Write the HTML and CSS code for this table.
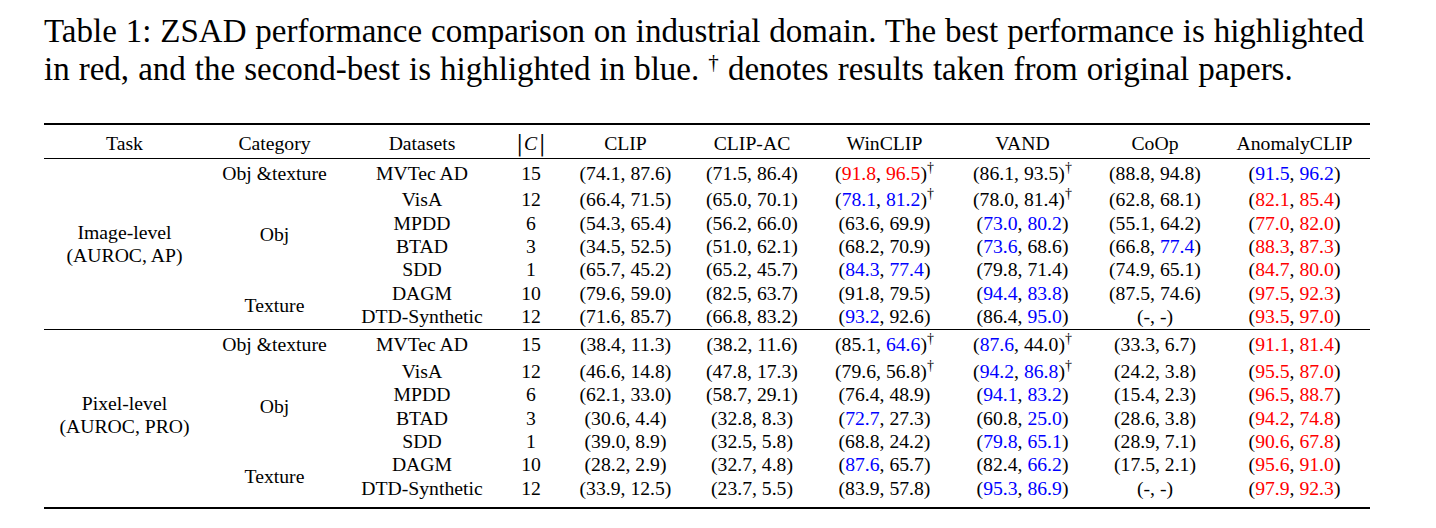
FILE: index.html
```html
<!DOCTYPE html>
<html lang="en">
<head>
<meta charset="utf-8">
<title>Table 1</title>
<link rel="stylesheet" href="styles.css">
</head>
<body>
<div class="page">
  <p class="caption">Table 1: ZSAD performance comparison on industrial domain. The best performance is highlighted <span class="tail">in red, and the second-best is highlighted in blue. <sup class="cdag">†</sup> denotes results taken from original papers.</span></p>
  <table class="results">
    <colgroup>
      <col class="w-task"><col class="w-cat"><col class="w-ds"><col class="w-n">
      <col class="w-clip"><col class="w-ac"><col class="w-win"><col class="w-vand"><col class="w-coop"><col class="w-anom">
    </colgroup>
    <thead>
      <tr>
        <th>Task</th><th>Category</th><th>Datasets</th>
        <th><span class="bar">|</span><span class="calc">C</span><span class="bar">|</span></th>
        <th>CLIP</th><th>CLIP-AC</th><th>WinCLIP</th><th>VAND</th><th>CoOp</th><th>AnomalyCLIP</th>
      </tr>
    </thead>
    <tbody class="img">
      <tr class="d1">
        <td class="span two" rowspan="7">Image-level<br>(AUROC, AP)</td>
        <td class="c">Obj &amp;texture</td>
        <td class="c">MVTec AD</td><td class="c">15</td>
        <td class="c">(74.1, 87.6)</td><td class="c">(71.5, 86.4)</td>
        <td class="c">(<span class="r">91.8</span>, <span class="r">96.5</span>)<sup class="dag">†</sup></td>
        <td class="c">(86.1, 93.5)<sup class="dag">†</sup></td>
        <td class="c">(88.8, 94.8)</td>
        <td class="c">(<span class="b">91.5</span>, <span class="b">96.2</span>)</td>
      </tr>
      <tr class="d2">
        <td class="span obj" rowspan="4">Obj</td>
        <td class="c">VisA</td><td class="c">12</td>
        <td class="c">(66.4, 71.5)</td><td class="c">(65.0, 70.1)</td>
        <td class="c">(<span class="b">78.1</span>, <span class="b">81.2</span>)<sup class="dag">†</sup></td>
        <td class="c">(78.0, 81.4)<sup class="dag">†</sup></td>
        <td class="c">(62.8, 68.1)</td>
        <td class="c">(<span class="r">82.1</span>, <span class="r">85.4</span>)</td>
      </tr>
      <tr>
        <td class="c">MPDD</td><td class="c">6</td>
        <td class="c">(54.3, 65.4)</td><td class="c">(56.2, 66.0)</td>
        <td class="c">(63.6, 69.9)</td>
        <td class="c">(<span class="b">73.0</span>, <span class="b">80.2</span>)</td>
        <td class="c">(55.1, 64.2)</td>
        <td class="c">(<span class="r">77.0</span>, <span class="r">82.0</span>)</td>
      </tr>
      <tr>
        <td class="c">BTAD</td><td class="c">3</td>
        <td class="c">(34.5, 52.5)</td><td class="c">(51.0, 62.1)</td>
        <td class="c">(68.2, 70.9)</td>
        <td class="c">(<span class="b">73.6</span>, 68.6)</td>
        <td class="c">(66.8, <span class="b">77.4</span>)</td>
        <td class="c">(<span class="r">88.3</span>, <span class="r">87.3</span>)</td>
      </tr>
      <tr>
        <td class="c">SDD</td><td class="c">1</td>
        <td class="c">(65.7, 45.2)</td><td class="c">(65.2, 45.7)</td>
        <td class="c">(<span class="b">84.3</span>, <span class="b">77.4</span>)</td>
        <td class="c">(79.8, 71.4)</td>
        <td class="c">(74.9, 65.1)</td>
        <td class="c">(<span class="r">84.7</span>, <span class="r">80.0</span>)</td>
      </tr>
      <tr>
        <td class="span" rowspan="2">Texture</td>
        <td class="c">DAGM</td><td class="c">10</td>
        <td class="c">(79.6, 59.0)</td><td class="c">(82.5, 63.7)</td>
        <td class="c">(91.8, 79.5)</td>
        <td class="c">(<span class="b">94.4</span>, <span class="b">83.8</span>)</td>
        <td class="c">(87.5, 74.6)</td>
        <td class="c">(<span class="r">97.5</span>, <span class="r">92.3</span>)</td>
      </tr>
      <tr class="last">
        <td class="c">DTD-Synthetic</td><td class="c">12</td>
        <td class="c">(71.6, 85.7)</td><td class="c">(66.8, 83.2)</td>
        <td class="c">(<span class="b">93.2</span>, 92.6)</td>
        <td class="c">(86.4, <span class="b">95.0</span>)</td>
        <td class="c">(-, -)</td>
        <td class="c">(<span class="r">93.5</span>, <span class="r">97.0</span>)</td>
      </tr>
    </tbody>
    <tbody class="px">
      <tr class="d1">
        <td class="span two bb" rowspan="7">Pixel-level<br>(AUROC, PRO)</td>
        <td class="c">Obj &amp;texture</td>
        <td class="c">MVTec AD</td><td class="c">15</td>
        <td class="c">(38.4, 11.3)</td><td class="c">(38.2, 11.6)</td>
        <td class="c">(85.1, <span class="b">64.6</span>)<sup class="dag">†</sup></td>
        <td class="c">(<span class="b">87.6</span>, 44.0)<sup class="dag">†</sup></td>
        <td class="c">(33.3, 6.7)</td>
        <td class="c">(<span class="r">91.1</span>, <span class="r">81.4</span>)</td>
      </tr>
      <tr class="d2">
        <td class="span obj" rowspan="4">Obj</td>
        <td class="c">VisA</td><td class="c">12</td>
        <td class="c">(46.6, 14.8)</td><td class="c">(47.8, 17.3)</td>
        <td class="c">(79.6, 56.8)<sup class="dag">†</sup></td>
        <td class="c">(<span class="b">94.2</span>, <span class="b">86.8</span>)<sup class="dag">†</sup></td>
        <td class="c">(24.2, 3.8)</td>
        <td class="c">(<span class="r">95.5</span>, <span class="r">87.0</span>)</td>
      </tr>
      <tr>
        <td class="c">MPDD</td><td class="c">6</td>
        <td class="c">(62.1, 33.0)</td><td class="c">(58.7, 29.1)</td>
        <td class="c">(76.4, 48.9)</td>
        <td class="c">(<span class="b">94.1</span>, <span class="b">83.2</span>)</td>
        <td class="c">(15.4, 2.3)</td>
        <td class="c">(<span class="r">96.5</span>, <span class="r">88.7</span>)</td>
      </tr>
      <tr>
        <td class="c">BTAD</td><td class="c">3</td>
        <td class="c">(30.6, 4.4)</td><td class="c">(32.8, 8.3)</td>
        <td class="c">(<span class="b">72.7</span>, 27.3)</td>
        <td class="c">(60.8, <span class="b">25.0</span>)</td>
        <td class="c">(28.6, 3.8)</td>
        <td class="c">(<span class="r">94.2</span>, <span class="r">74.8</span>)</td>
      </tr>
      <tr>
        <td class="c">SDD</td><td class="c">1</td>
        <td class="c">(39.0, 8.9)</td><td class="c">(32.5, 5.8)</td>
        <td class="c">(68.8, 24.2)</td>
        <td class="c">(<span class="b">79.8</span>, <span class="b">65.1</span>)</td>
        <td class="c">(28.9, 7.1)</td>
        <td class="c">(<span class="r">90.6</span>, <span class="r">67.8</span>)</td>
      </tr>
      <tr>
        <td class="span bb" rowspan="2">Texture</td>
        <td class="c">DAGM</td><td class="c">10</td>
        <td class="c">(28.2, 2.9)</td><td class="c">(32.7, 4.8)</td>
        <td class="c">(<span class="b">87.6</span>, 65.7)</td>
        <td class="c">(82.4, <span class="b">66.2</span>)</td>
        <td class="c">(17.5, 2.1)</td>
        <td class="c">(<span class="r">95.6</span>, <span class="r">91.0</span>)</td>
      </tr>
      <tr class="last">
        <td class="c">DTD-Synthetic</td><td class="c">12</td>
        <td class="c">(33.9, 12.5)</td><td class="c">(23.7, 5.5)</td>
        <td class="c">(83.9, 57.8)</td>
        <td class="c">(<span class="b">95.3</span>, <span class="b">86.9</span>)</td>
        <td class="c">(-, -)</td>
        <td class="c">(<span class="r">97.9</span>, <span class="r">92.3</span>)</td>
      </tr>
    </tbody>
  </table>
</div>
</body>
</html>
```

FILE: styles.css
```css
html, body {
  margin: 0;
  padding: 0;
  background: #ffffff;
}

body {
  font-family: "Liberation Serif", "Times New Roman", serif;
  color: #000000;
}

.page {
  padding: 13px 0 0 44px;
  width: 1326px;
}

.caption {
  margin: 0;
  width: 1320px;
  font-size: 33px;
  line-height: 37.5px;
  text-align: justify;
  text-align-last: left;
}

.tail {
  word-spacing: 0.8px;
}

.cdag {
  font-size: 21px;
  line-height: 0;
  vertical-align: 11px;
}

.results {
  margin-top: 35px;
  width: 1326px;
  table-layout: fixed;
  border-collapse: separate;
  border-spacing: 0;
  font-size: 19.7px;
  line-height: 23.33px;
}

.w-task { width: 161px; }
.w-cat  { width: 139px; }
.w-ds   { width: 156px; }
.w-n    { width: 62px; }
.w-clip { width: 127px; }
.w-ac   { width: 126px; }
.w-win  { width: 139px; }
.w-vand { width: 137px; }
.w-coop { width: 128px; }
.w-anom { width: 151px; }

.results th,
.results td {
  padding: 0;
  text-align: center;
  vertical-align: top;
  white-space: nowrap;
  font-weight: normal;
}

.results thead th {
  border-top: 2px solid #000;
  border-bottom: 1px solid #000;
  padding: 7px 0 2.7px;
}

.results td.span {
  vertical-align: middle;
}

.results td.two {
  line-height: 23.5px;
}

.results td.obj {
  padding-top: 3px;
}

.bar {
  display: inline-block;
  font-family: "DejaVu Serif", serif;
  font-size: 19px;
  transform: scaleY(1.2);
}

.calc {
  font-family: "Liberation Serif", serif;
  font-style: italic;
  font-size: 19.7px;
  padding: 0 2px 0 1px;
}

.dag {
  font-size: 14px;
  line-height: 0;
  vertical-align: 8px;
}

.r { color: #ff0000; }
.b { color: #0000ff; }

.img tr.d1 td.c { padding-top: 2.7px; }
.img tr.d2 td.c { padding-top: 3.4px; }
.img tr.last td.c { padding-bottom: 1px; }

.px tr:first-child td { border-top: 1px solid #000; }
.px tr.d1 td.c { padding-top: 3px; }
.px tr.d2 td.c { padding-top: 3.4px; }
.px tr.last td.c,
.px td.bb { padding-bottom: 6.5px; }
.px tr.last td,
.px td.bb { border-bottom: 2px solid #000; }
```
